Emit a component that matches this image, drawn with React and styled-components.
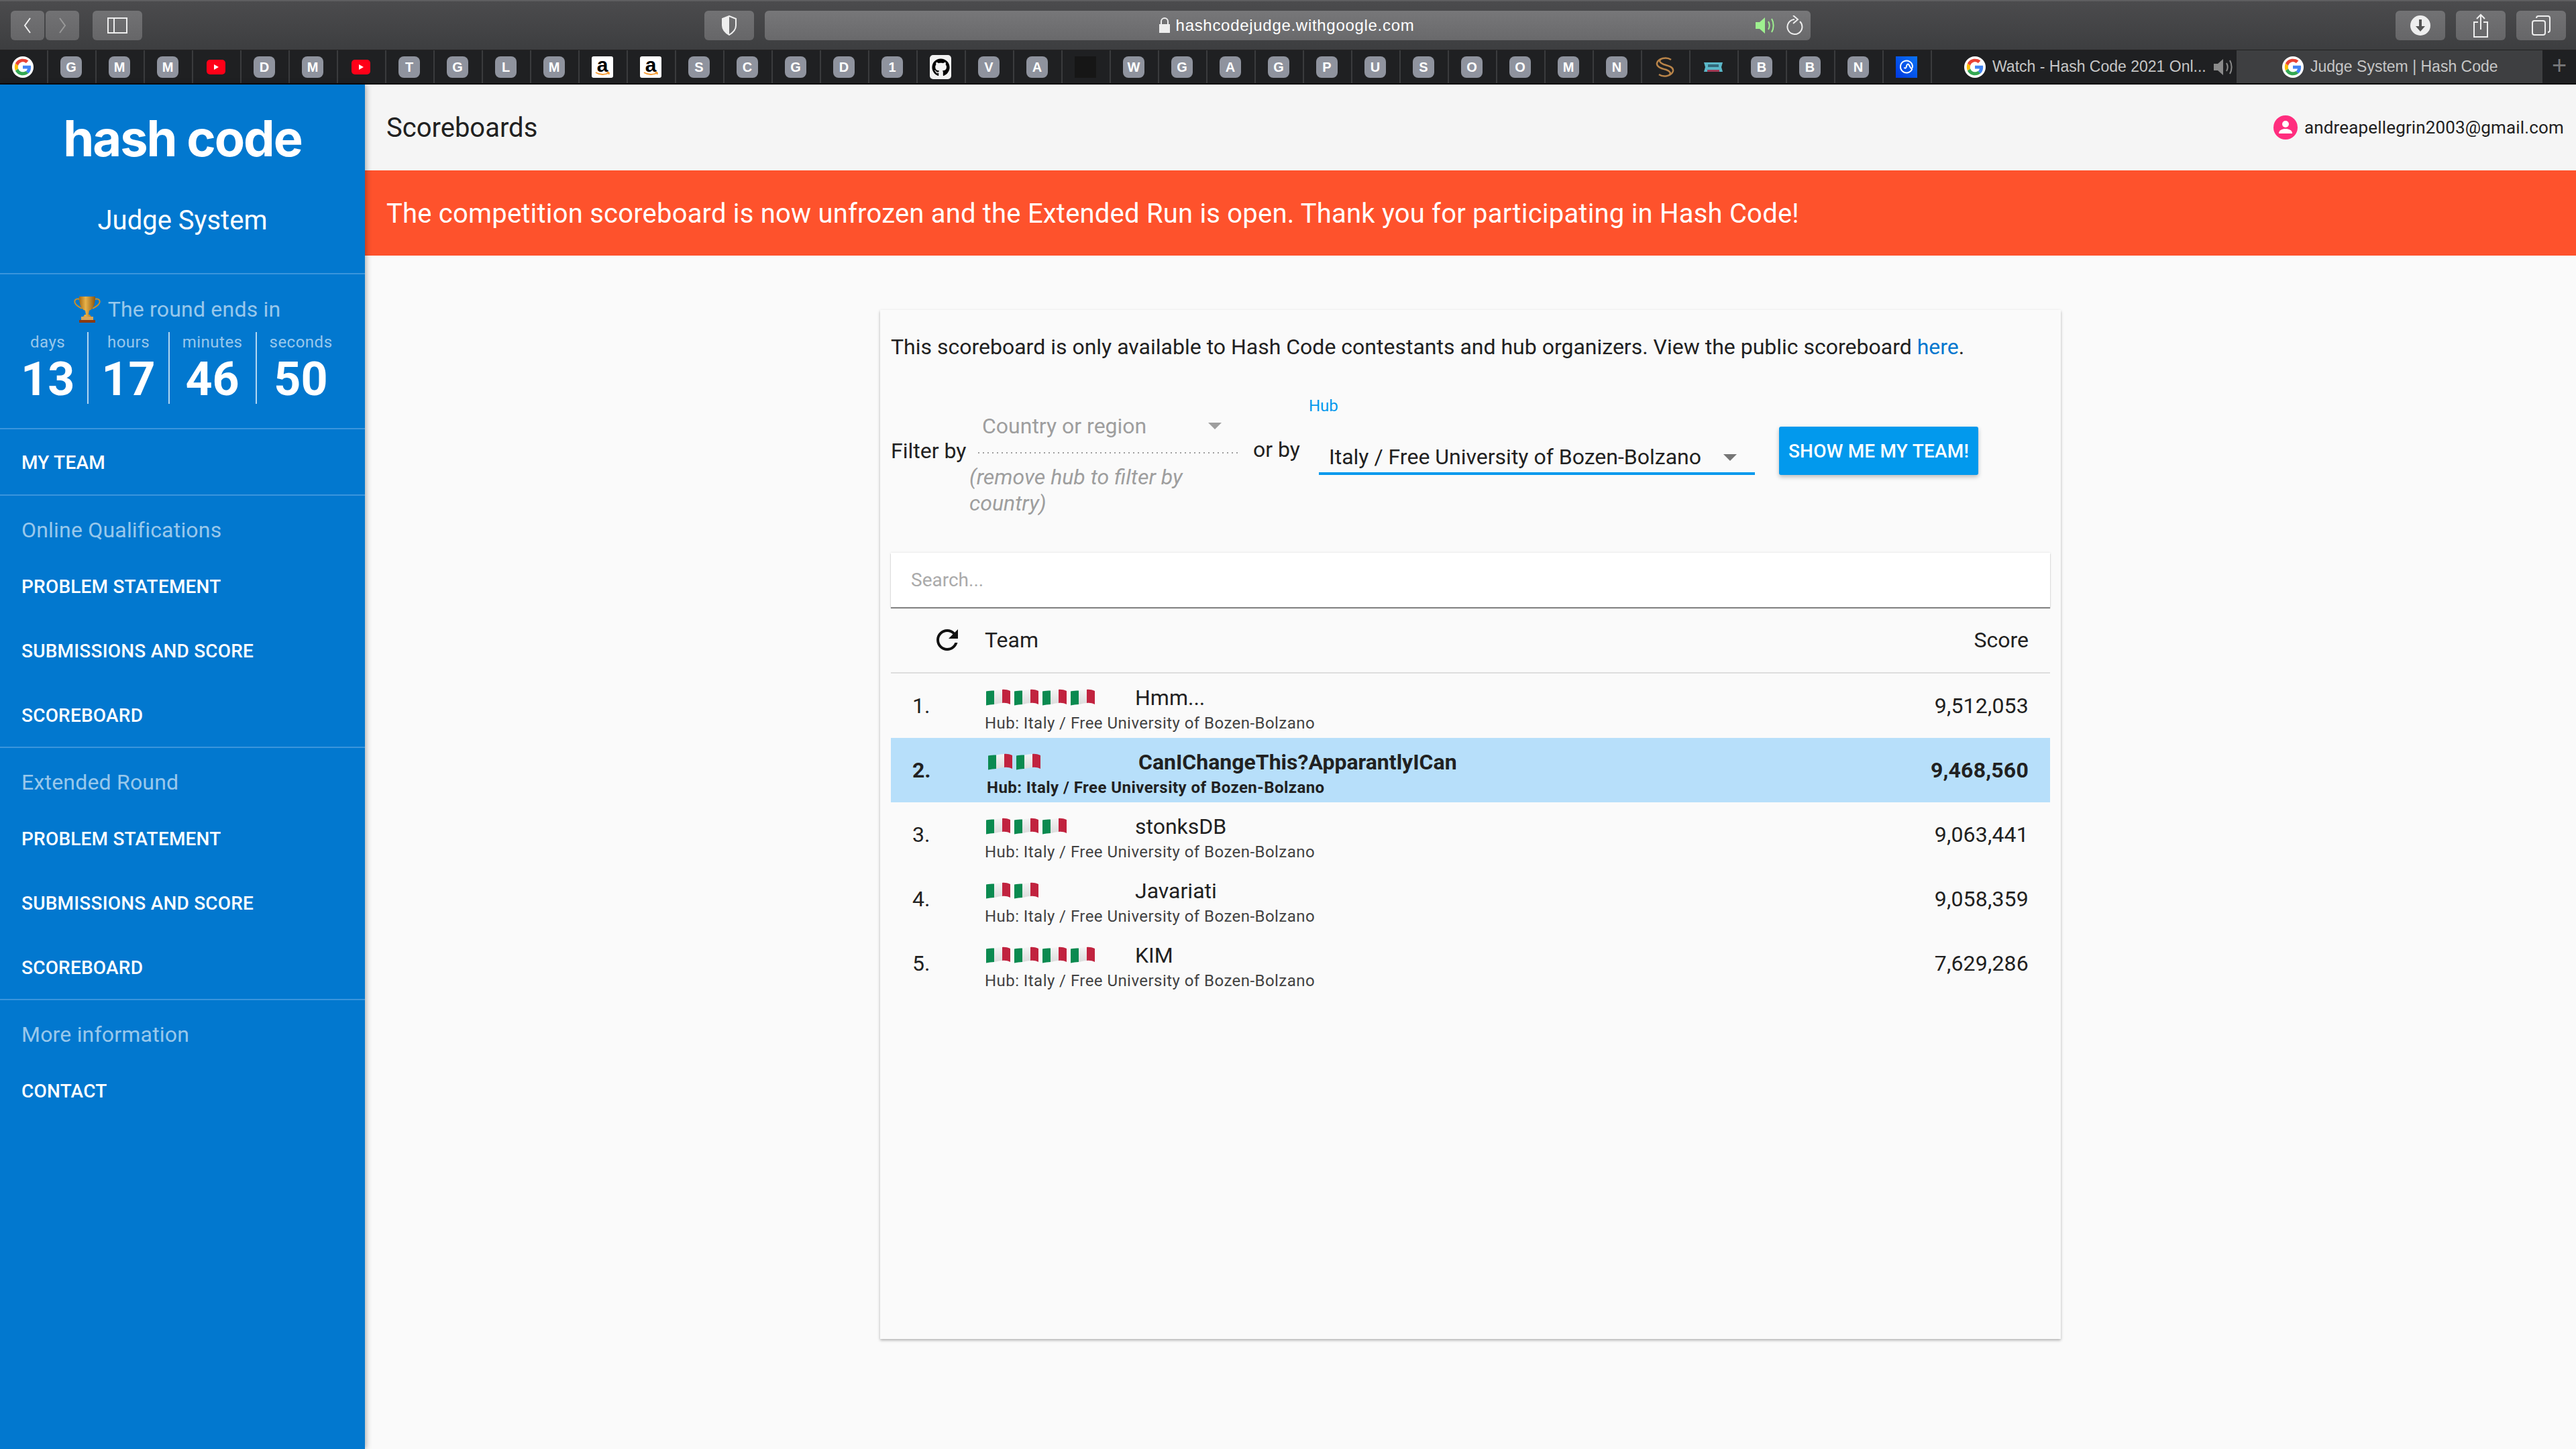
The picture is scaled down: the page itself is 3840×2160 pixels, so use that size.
import React from 'react'
import styled, { createGlobalStyle } from 'styled-components'
import { FaGithub } from 'react-icons/fa'

const Global = createGlobalStyle`
    html, body {
        margin: 0;
        padding: 0;
        height: 100%;
        background: #fafafa;
    }
    #root {
        height: 100%;
    }
    * {
        box-sizing: border-box;
    }
`

const Page = styled.div`
    width: 3840px;
    height: 2160px;
    display: flex;
    flex-direction: column;
    overflow: hidden;
    font-family: Roboto, "Liberation Sans", sans-serif;
    color: #212121;
`

/* safari chrome */
const TitleBar = styled.div`
    height: 75px;
    flex: none;
    padding: 14px 16px 0;
    display: flex;
    background: linear-gradient(#4b4b4d, #3d3e40);
    border-top: 2px solid #5e5e60;
    border-bottom: 1px solid #222;
`
const ChromeBtn = styled.div`
    width: ${p => p.$w || 74}px;
    height: 44px;
    margin-right: ${p => p.$mr || 0}px;
    flex: none;
    border-radius: 6px;
    background: linear-gradient(#727274, #666668);
    display: flex;
    align-items: center;
    justify-content: center;
`
const UrlBar = styled.div`
    width: 1559px;
    height: 44px;
    margin-right: 872px;
    flex: none;
    border-radius: 6px;
    background: linear-gradient(#777779, #69696b);
    position: relative;
    display: flex;
    align-items: center;
    justify-content: center;
    gap: 8px;
    padding-right: 4px;
    color: #fff;
    font: 24px "Liberation Sans", sans-serif;
    letter-spacing: 0.7px;
`
const UrlIcons = styled.div`
    position: absolute;
    right: 10px;
    top: 7px;
    display: flex;
    gap: 15px;
`
const TabBar = styled.div`
    height: 51px;
    flex: none;
    display: flex;
    background: #1f2022;
    border-bottom: 2px solid #0a0a0a;
`
const Fav = styled.div`
    width: 72px;
    height: 49px;
    flex: none;
    border-right: 2px solid #3a3b3d;
    padding-left: 18px;
    padding-top: 9px;
`
const Letter = styled.div`
    width: 32px;
    height: 32px;
    border-radius: 8px;
    background: #8f939e;
    color: #fff;
    font: bold 20px/32px "Liberation Sans", sans-serif;
    text-align: center;
`
const GithubTile = styled.div`
    width: 32px;
    height: 36px;
    margin-top: -2px;
    border-radius: 5px;
    background: #f2f2f2;
    color: #000;
    display: flex;
    align-items: center;
    justify-content: center;
    font-size: 27px;
`
const DarkTile = styled.div`
    width: 32px;
    height: 32px;
    background: #161616;
`
const AmazonTile = styled.div`
    width: 32px;
    height: 32px;
    border-radius: 3px;
    background: #fff;
    color: #000;
    font: bold 30px/25px "Liberation Sans", sans-serif;
    text-align: center;
    position: relative;
    svg {
        position: absolute;
        left: 0;
        bottom: 0;
    }
`
const Tab = styled.div`
    width: ${p => p.$w}px;
    flex: none;
    height: 49px;
    display: flex;
    align-items: center;
    gap: 10px;
    padding-left: ${p => p.$pl}px;
    background: ${p => p.$active ? '#3e3f41' : 'transparent'};
    color: #c6c6c6;
    font: 23px "Liberation Sans", sans-serif;
    white-space: nowrap;
    position: relative;
`
const PlusTab = styled.div`
    flex: 1;
    display: flex;
    align-items: center;
    justify-content: center;
    color: #77787a;
    font: 38px "Liberation Sans", sans-serif;
    padding-bottom: 4px;
`

const Body = styled.div`
    flex: 1;
    display: flex;
    min-height: 0;
`

/* sidebar */
const Side = styled.aside`
    width: 544px;
    flex: none;
    background: #0278cf;
    color: #fff;
    box-shadow: 2px 0 8px rgba(0, 0, 0, 0.3);
    position: relative;
    z-index: 2;
`
const Brand = styled.div`
    height: 283px;
    padding-top: 34px;
    text-align: center;
    border-bottom: 2px solid #3a95dc;
`
const Logo = styled.div`
    font: 700 74px/92px Inter, sans-serif;
    letter-spacing: -2px;
`
const Subtitle = styled.div`
    margin-top: 53px;
    font-size: 40px;
    line-height: 48px;
`
const Round = styled.div`
    height: 231px;
    border-bottom: 2px solid #3a95dc;
    padding: 31px 0 0 12px;
`
const RoundTitle = styled.div`
    display: flex;
    align-items: center;
    justify-content: center;
    gap: 11px;
    padding-right: 28px;
    height: 42px;
    font-size: 32px;
    letter-spacing: 0.2px;
    color: rgba(255, 255, 255, 0.6);
`
const Countdown = styled.div`
    display: flex;
    margin-top: 13px;
`
const Unit = styled.div`
    height: 107px;
    padding: 0 19px;
    text-align: center;
    border-right: ${p => p.$last ? 'none' : '2px solid rgba(255,255,255,.7)'};
`
const UnitLabel = styled.div`
    font-size: 24px;
    line-height: 30px;
    letter-spacing: 0.5px;
    color: rgba(255, 255, 255, 0.6);
`
const UnitValue = styled.div`
    font-size: 70px;
    font-weight: 700;
    line-height: 72px;
    margin-top: 4px;
`
const NavSection = styled.div`
    border-bottom: ${p => p.$last ? 'none' : '2px solid #3a95dc'};
`
const NavTitle = styled.div`
    height: 86px;
    padding: 32px 32px 0;
    font-size: 32px;
    line-height: 38px;
    letter-spacing: 0.2px;
    color: rgba(255, 255, 255, 0.6);
`
const NavLink = styled.div`
    height: ${p => p.$h || 96}px;
    padding: 2px 0 0 32px;
    display: flex;
    align-items: center;
    font-size: 28px;
    font-weight: 500;
    letter-spacing: 0.2px;
`

/* main column */
const Main = styled.main`
    flex: 1;
    min-width: 0;
    background: #fafafa;
    display: flex;
    flex-direction: column;
`
const TopBar = styled.header`
    height: 128px;
    flex: none;
    display: flex;
    align-items: center;
    justify-content: space-between;
    padding: 0 18px 0 32px;
    background: #f5f5f5;
`
const PageTitle = styled.div`
    font-size: 40px;
`
const UserBox = styled.div`
    display: flex;
    align-items: center;
    gap: 10px;
    font-size: 26px;
    letter-spacing: 0.15px;
`
const Banner = styled.div`
    height: 127px;
    flex: none;
    display: flex;
    align-items: center;
    padding: 2px 0 0 32px;
    background: #fe522c;
    color: #fff;
    font-size: 40px;
    letter-spacing: 0.2px;
`
const Card = styled.section`
    width: 1760px;
    height: 1534px;
    margin: 81px auto 0;
    padding: 0 16px;
    background: #fafafa;
    box-shadow: 0 2px 4px rgba(0, 0, 0, 0.3);
`
const Notice = styled.p`
    margin: 0;
    padding-top: 36px;
    font-size: 32px;
    line-height: 38px;
    a {
        color: #0277cf;
    }
`
const FilterRow = styled.div`
    height: 234px;
    margin-top: 54px;
    display: flex;
    align-items: flex-start;
    font-size: 32px;
`
const FilterLabel = styled.div`
    width: ${p => p.$w}px;
    margin-top: ${p => p.$mt}px;
    padding-left: ${p => p.$pl || 0}px;
    flex: none;
    line-height: 40px;
    white-space: nowrap;
`
const CountryCol = styled.div`
    width: 401px;
    flex: none;
`
const CountrySelect = styled.div`
    height: 86px;
    margin-left: 13px;
    padding: 25px 0 0 6px;
    line-height: 40px;
    color: #9e9e9e;
    background: repeating-linear-gradient(90deg, #9e9e9e 0 2px, transparent 2px 7px) left bottom / 100% 2px no-repeat;
    position: relative;
`
const Caret = styled.span`
    position: absolute;
    right: ${p => p.$right}px;
    top: ${p => p.$top}px;
    width: 0;
    height: 0;
    border-left: 10px solid transparent;
    border-right: 10px solid transparent;
    border-top: 10px solid ${p => p.$color};
`
const Helper = styled.div`
    margin-top: 16px;
    font-style: italic;
    line-height: 39px;
    color: #9e9e9e;
`
const HubField = styled.div`
    width: 665px;
    flex: none;
`
const HubLabel = styled.div`
    font-size: 24px;
    line-height: 30px;
    color: #0299ed;
`
const HubSelect = styled.div`
    margin: 41px 0 0 15px;
    height: 47px;
    line-height: 40px;
    padding-left: 15px;
    border-bottom: 4px solid #0299ed;
    position: relative;
    white-space: nowrap;
`
const TeamButton = styled.button`
    width: 297px;
    height: 72px;
    margin: 46px 0 0 36px;
    flex: none;
    padding: 0;
    border: none;
    border-radius: 3px;
    background: #0299ed;
    color: #fff;
    font: 500 28px Roboto, sans-serif;
    letter-spacing: 0.2px;
    white-space: nowrap;
    box-shadow: 0 3px 6px rgba(0, 0, 0, 0.25);
`
const Search = styled.div`
    height: 81px;
    padding-left: 30px;
    display: flex;
    align-items: center;
    background: #fff;
    color: #aaa;
    font-size: 28px;
    box-shadow: 0 2px 1px rgba(0, 0, 0, 0.45), 0 0 3px rgba(0, 0, 0, 0.12);
`
const TableHead = styled.div`
    height: 99px;
    display: flex;
    align-items: center;
    padding: 0 32px 0 60px;
    font-size: 32px;
    border-bottom: 2px solid #dedede;
`
const HeadTeam = styled.div`
    flex: 1;
    margin-left: 32px;
`
const Row = styled.div`
    height: 96px;
    display: flex;
    align-items: center;
    padding: 0 32px 0 32px;
    font-weight: ${p => p.$me ? 700 : 400};
    background: ${p => p.$me ? '#b7dffa' : 'transparent'};
`
const Rank = styled.div`
    width: ${p => p.$me ? 111 : 108}px;
    flex: none;
    font-size: 32px;
`
const TeamCell = styled.div`
    flex: 1;
    min-width: 0;
    height: 96px;
    padding-top: 16px;
`
const TeamLine = styled.div`
    height: 40px;
    display: flex;
    align-items: center;
    font-size: 32px;
`
const Flags = styled.div`
    width: ${p => p.$me ? 226 : 224}px;
    flex: none;
    padding-left: 2px;
    display: flex;
    gap: 6px;
`
const Hub = styled.div`
    font-size: 24px;
    line-height: 36px;
    letter-spacing: 0.45px;
    color: ${p => p.$me ? '#212121' : '#424242'};
`
const Score = styled.div`
    font-size: 32px;
    letter-spacing: 0.2px;
    text-align: right;
`

const Google = () => (
    <svg width="32" height="32" viewBox="0 0 32 32">
        <circle cx="16" cy="16" r="16" fill="#fff" />
        <g transform="translate(16 16) scale(1.35) translate(-16 -16)">
            <path d="M25 16.200c0-.7-.1-1.300-.2-1.900H16v3.600h5.100c-.2 1.200-.9 2.200-1.900 2.900l3 2.300c1.800-1.600 2.800-4 2.800-6.900z" fill="#4285f4" />
            <path d="M16 25c2.500 0 4.500-.8 6.100-2.200l-3-2.300c-.8.600-1.900.9-3.100.9-2.400 0-4.400-1.600-5.100-3.800l-3.100 2.400C9.300 23.100 12.400 25 16 25z" fill="#34a853" />
            <path d="M10.900 17.600c-.4-1.100-.4-2.200 0-3.300L7.800 12c-1.100 2.500-1.100 5.400 0 7.900z" fill="#fbbc05" />
            <path d="M16 10.300c1.300 0 2.500.5 3.500 1.400l2.700-2.700C20.500 7.500 18.300 7 16 7c-3.600 0-6.700 1.900-8.200 5l3.100 2.300c.7-2.300 2.700-4 5.100-4z" fill="#ea4335" />
        </g>
    </svg>
)

const YouTube = () => (
    <svg width="32" height="32" viewBox="0 0 32 32">
        <rect x="2" y="5" width="28" height="22" rx="5" fill="#ff0018" />
        <path d="M13 12l7 4-7 4z" fill="#fff" />
    </svg>
)

const Amazon = () => (
    <AmazonTile>
        a
        <svg width="32" height="10" viewBox="0 0 32 10">
            <path d="M6 2c6 4 14 4 20 .5M26 2l-3.500-.5M26 2l-.5 3" fill="none" stroke="#f79c34" strokeWidth="2" />
        </svg>
    </AmazonTile>
)

const Swirl = () => (
    <svg width="32" height="32" viewBox="0 0 32 32" fill="none" stroke="#b98449" strokeWidth="2.500">
        <path d="M25 5C18 0 6 3 4 10c-1 6 7 8 14 10 5 2 8 5 4 8" />
        <path d="M7 27c7 5 19 2 21-5 1-6-7-8-14-10-5-2-8-5-4-8" />
    </svg>
)

const CarFav = () => (
    <svg width="32" height="32" viewBox="0 0 32 32">
        <path d="M2 9h28l-2 7 2 7H2l2-7z" fill="#5bb8c9" />
        <rect x="8" y="12" width="16" height="4" fill="#33687a" />
        <rect x="7" y="20" width="18" height="3" fill="#a03a55" />
    </svg>
)

const Cmc = () => (
    <svg width="32" height="32" viewBox="0 0 32 32">
        <defs>
            <linearGradient id="cmc" x1="1" y1="0" x2="0" y2="1">
                <stop offset="0" stopColor="#0a74f5" />
                <stop offset="1" stopColor="#0038e0" />
            </linearGradient>
        </defs>
        <rect width="32" height="32" fill="url(#cmc)" />
        <path d="M24.500 18.500A9 9 0 1 1 25 15c0 3-2 3.500-3 2l-2.500-4.500c-1-1.500-2.500-1-3 .5l-1 3.500c-.5 1.500-2 1.500-3 0" fill="none" stroke="#fff" strokeWidth="2" />
    </svg>
)

const favourites = [
    'google', 'G', 'M', 'M', 'yt', 'D', 'M', 'yt', 'T', 'G', 'L', 'M', 'amazon', 'amazon', 'S', 'C', 'G', 'D', '1',
    'github', 'V', 'A', 'dark', 'W', 'G', 'A', 'G', 'P', 'U', 'S', 'O', 'O', 'M', 'N', 'swirl', 'car', 'B', 'B', 'N', 'cmc',
]

const FavIcon = ({ kind }) => {
    if (kind === 'google') return <Google />
    if (kind === 'yt') return <YouTube />
    if (kind === 'amazon') return <Amazon />
    if (kind === 'github') return <GithubTile><FaGithub /></GithubTile>
    if (kind === 'dark') return <DarkTile />
    if (kind === 'swirl') return <Swirl />
    if (kind === 'car') return <CarFav />
    if (kind === 'cmc') return <Cmc />
    return <Letter>{kind}</Letter>
}

const Speaker = ({ color }) => (
    <svg width="32" height="30" viewBox="0 0 32 30" fill="none">
        <path d="M1 10h6l8-7v24l-8-7H1z" fill={color} />
        <path d="M20 9c2 3.500 2 8.500 0 12M25 5c3.500 6 3.500 14 0 20" stroke={color} strokeWidth="2" />
    </svg>
)

const Flag = () => (
    <svg width="36" height="26" viewBox="0 0 36 26">
        <defs>
            <linearGradient id="flagWhite" x1="0" y1="0" x2="0" y2="1">
                <stop offset="0" stopColor="#f4f4f4" />
                <stop offset="1" stopColor="#dcdcdc" />
            </linearGradient>
        </defs>
        <path d="M0 3.500c4-1 8-1 12-1V23c-4 0-8 .5-12 1.500z" fill="#0b8a50" />
        <path d="M12 2.500c4-.5 8-1.500 12-1.500v20c-4 0-8 1.500-12 2z" fill="url(#flagWhite)" />
        <path d="M24 1c4-.5 8 .5 12 2v20c-4-2-8-2.500-12-2z" fill="#c1233f" />
    </svg>
)

const RefreshIcon = () => (
    <svg width="48" height="48" viewBox="0 0 24 24" fill="#111">
        <path d="M17.650 6.350C16.200 4.900 14.210 4 12 4c-4.420 0-7.990 3.580-7.990 8s3.570 8 7.990 8c3.730 0 6.840-2.550 7.730-6h-2.080c-.82 2.330-3.040 4-5.650 4-3.310 0-6-2.690-6-6s2.690-6 6-6c1.660 0 3.140.69 4.220 1.780L13 11h7V4l-2.350 2.350z" />
    </svg>
)

const Trophy = () => (
    <svg width="40" height="40" viewBox="0 0 40 40">
        <defs>
            <linearGradient id="gold" x1="0" x2="1">
                <stop offset="0" stopColor="#a86a12" />
                <stop offset="0.4" stopColor="#e8b24a" />
                <stop offset="1" stopColor="#8c560f" />
            </linearGradient>
        </defs>
        <path d="M9 5C3 3 0 7 2 11c2 4 7 6 10 8M31 5c6-2 9 2 7 6-2 4-7 6-10 8" fill="none" stroke="#c98f2c" strokeWidth="2" />
        <path d="M8 1h24c0 10-2 19-9 21l-1 6h2l2 3H14l2-3h2l-1-6C10 20 8 11 8 1z" fill="url(#gold)" />
        <rect x="11" y="31" width="18" height="6" fill="#d9a558" />
        <rect x="8" y="36" width="24" height="4" fill="#8a3a12" />
    </svg>
)

const Avatar = () => (
    <svg width="36" height="36" viewBox="0 0 36 36">
        <circle cx="18" cy="18" r="18" fill="#ff2d7e" />
        <circle cx="18" cy="13" r="5" fill="#fff" />
        <path d="M8 27c0-5 5-7 10-7s10 2 10 7z" fill="#fff" />
    </svg>
)

const teams = [
    { rank: 1, flags: 4, name: 'Hmm...', score: '9,512,053' },
    { rank: 2, flags: 2, name: 'CanIChangeThis?ApparantlyICan', score: '9,468,560', me: true },
    { rank: 3, flags: 3, name: 'stonksDB', score: '9,063,441' },
    { rank: 4, flags: 2, name: 'Javariati', score: '9,058,359' },
    { rank: 5, flags: 4, name: 'KIM', score: '7,629,286' },
]

const rounds = [
    { title: 'Online Qualifications', links: ['PROBLEM STATEMENT', 'SUBMISSIONS AND SCORE', 'SCOREBOARD'] },
    { title: 'Extended Round', links: ['PROBLEM STATEMENT', 'SUBMISSIONS AND SCORE', 'SCOREBOARD'] },
    { title: 'More information', links: ['CONTACT'] },
]

const units = [['days', 13], ['hours', 17], ['minutes', 46], ['seconds', 50]]

const Browser = () => (
    <>
        <TitleBar>
            <ChromeBtn $w={50} $mr={2}>
                <svg width="16" height="28" viewBox="0 0 16 28" fill="none" stroke="#eee" strokeWidth="2"><path d="M12 3L4 14l8 11" /></svg>
            </ChromeBtn>
            <ChromeBtn $w={50} $mr={20}>
                <svg width="16" height="28" viewBox="0 0 16 28" fill="none" stroke="#999" strokeWidth="2"><path d="M4 3l8 11-8 11" /></svg>
            </ChromeBtn>
            <ChromeBtn $mr={838}>
                <svg width="30" height="24" viewBox="0 0 30 24" fill="none" stroke="#eee" strokeWidth="2"><rect x="1" y="1" width="28" height="22" /><path d="M10 1v22" /></svg>
            </ChromeBtn>
            <ChromeBtn $mr={16}>
                <svg width="24" height="30" viewBox="0 0 24 30"><path d="M12 1l10 4v10c0 6-5 11-10 14C7 26 2 21 2 15V5z" fill="none" stroke="#eee" strokeWidth="2" /><path d="M12 1L2 5v10c0 6 5 11 10 14z" fill="#eee" /></svg>
            </ChromeBtn>
            <UrlBar>
                <svg width="18" height="24" viewBox="0 0 18 24"><rect x="1" y="10" width="16" height="13" fill="#eee" /><path d="M4 11V6a5 5 0 0 1 10 0v5" fill="none" stroke="#eee" strokeWidth="2" /></svg>
                hashcodejudge.withgoogle.com
                <UrlIcons>
                    <Speaker color="#9ef08f" />
                    <svg width="26" height="30" viewBox="0 0 26 30" fill="none" stroke="#eee" strokeWidth="2"><path d="M20 9a11 11 0 1 1-8-3" /><path d="M10 0l7 6-7 6" /></svg>
                </UrlIcons>
            </UrlBar>
            <ChromeBtn $mr={16}>
                <svg width="32" height="32" viewBox="0 0 32 32"><circle cx="16" cy="16" r="15" fill="#eee" /><path d="M14 7h4v10h5l-7 8-7-8h5z" fill="#555" /></svg>
            </ChromeBtn>
            <ChromeBtn $mr={16}>
                <svg width="24" height="36" viewBox="0 0 24 36" fill="none" stroke="#eee" strokeWidth="2"><path d="M8 13H2v22h20V13h-6M12 24V2M6 8l6-6 6 6" /></svg>
            </ChromeBtn>
            <ChromeBtn>
                <svg width="28" height="30" viewBox="0 0 28 30" fill="none" stroke="#eee" strokeWidth="2"><rect x="1" y="8" width="19" height="21" rx="3" /><path d="M7 4a3 3 0 0 1 3-3h14a3 3 0 0 1 3 3v18a3 3 0 0 1-3 3" /></svg>
            </ChromeBtn>
        </TitleBar>
        <TabBar>
            {favourites.map((kind, i) => <Fav key={i}><FavIcon kind={kind} /></Fav>)}
            <Tab $w={454} $pl={48}>
                <Google />
                Watch - Hash Code 2021 Onl...
                <Speaker color="#8a8a8a" />
            </Tab>
            <Tab $w={456} $pl={68} $active>
                <Google />
                Judge System | Hash Code
            </Tab>
            <PlusTab>+</PlusTab>
        </TabBar>
    </>
)

const Sidebar = () => (
    <Side>
        <Brand>
            <Logo>hash code</Logo>
            <Subtitle>Judge System</Subtitle>
        </Brand>
        <Round>
            <RoundTitle><Trophy />The round ends in</RoundTitle>
            <Countdown>
                {units.map(([label, value], i) => (
                    <Unit key={label} $last={i === 3}>
                        <UnitLabel>{label}</UnitLabel>
                        <UnitValue>{value}</UnitValue>
                    </Unit>
                ))}
            </Countdown>
        </Round>
        <NavSection>
            <NavLink $h={97}>MY TEAM</NavLink>
        </NavSection>
        {rounds.map((round, i) => (
            <NavSection key={round.title} $last={i === 2}>
                <NavTitle>{round.title}</NavTitle>
                {round.links.map(link => <NavLink key={link}>{link}</NavLink>)}
            </NavSection>
        ))}
    </Side>
)

const App = () => (
    <Page>
        <Global />
        <Browser />
        <Body>
            <Sidebar />
            <Main>
                <TopBar>
                    <PageTitle>Scoreboards</PageTitle>
                    <UserBox><Avatar />andreapellegrin2003@gmail.com</UserBox>
                </TopBar>
                <Banner>The competition scoreboard is now unfrozen and the Extended Run is open. Thank you for participating in Hash Code!</Banner>
                <Card>
                    <Notice>This scoreboard is only available to Hash Code contestants and hub organizers. View the public scoreboard <a>here</a>.</Notice>
                    <FilterRow>
                        <FilterLabel $w={117} $mt={62}>Filter by</FilterLabel>
                        <CountryCol>
                            <CountrySelect>
                                Country or region
                                <Caret $right={25} $top={40} $color="#9e9e9e" />
                            </CountrySelect>
                            <Helper>(remove hub to filter by country)</Helper>
                        </CountryCol>
                        <FilterLabel $w={105} $mt={60} $pl={22}>or by</FilterLabel>
                        <HubField>
                            <HubLabel>Hub</HubLabel>
                            <HubSelect>
                                Italy / Free University of Bozen-Bolzano
                                <Caret $right={27} $top={16} $color="#757575" />
                            </HubSelect>
                        </HubField>
                        <TeamButton>SHOW ME MY TEAM!</TeamButton>
                    </FilterRow>
                    <Search>Search...</Search>
                    <TableHead>
                        <RefreshIcon />
                        <HeadTeam>Team</HeadTeam>
                        <div>Score</div>
                    </TableHead>
                    {teams.map(t => (
                        <Row key={t.rank} $me={t.me}>
                            <Rank $me={t.me}>{t.rank}.</Rank>
                            <TeamCell>
                                <TeamLine>
                                    <Flags $me={t.me}>
                                        {Array.from({ length: t.flags }, (_, i) => <Flag key={i} />)}
                                    </Flags>
                                    {t.name}
                                </TeamLine>
                                <Hub $me={t.me}>Hub: Italy / Free University of Bozen-Bolzano</Hub>
                            </TeamCell>
                            <Score>{t.score}</Score>
                        </Row>
                    ))}
                </Card>
            </Main>
        </Body>
    </Page>
)

export default App
